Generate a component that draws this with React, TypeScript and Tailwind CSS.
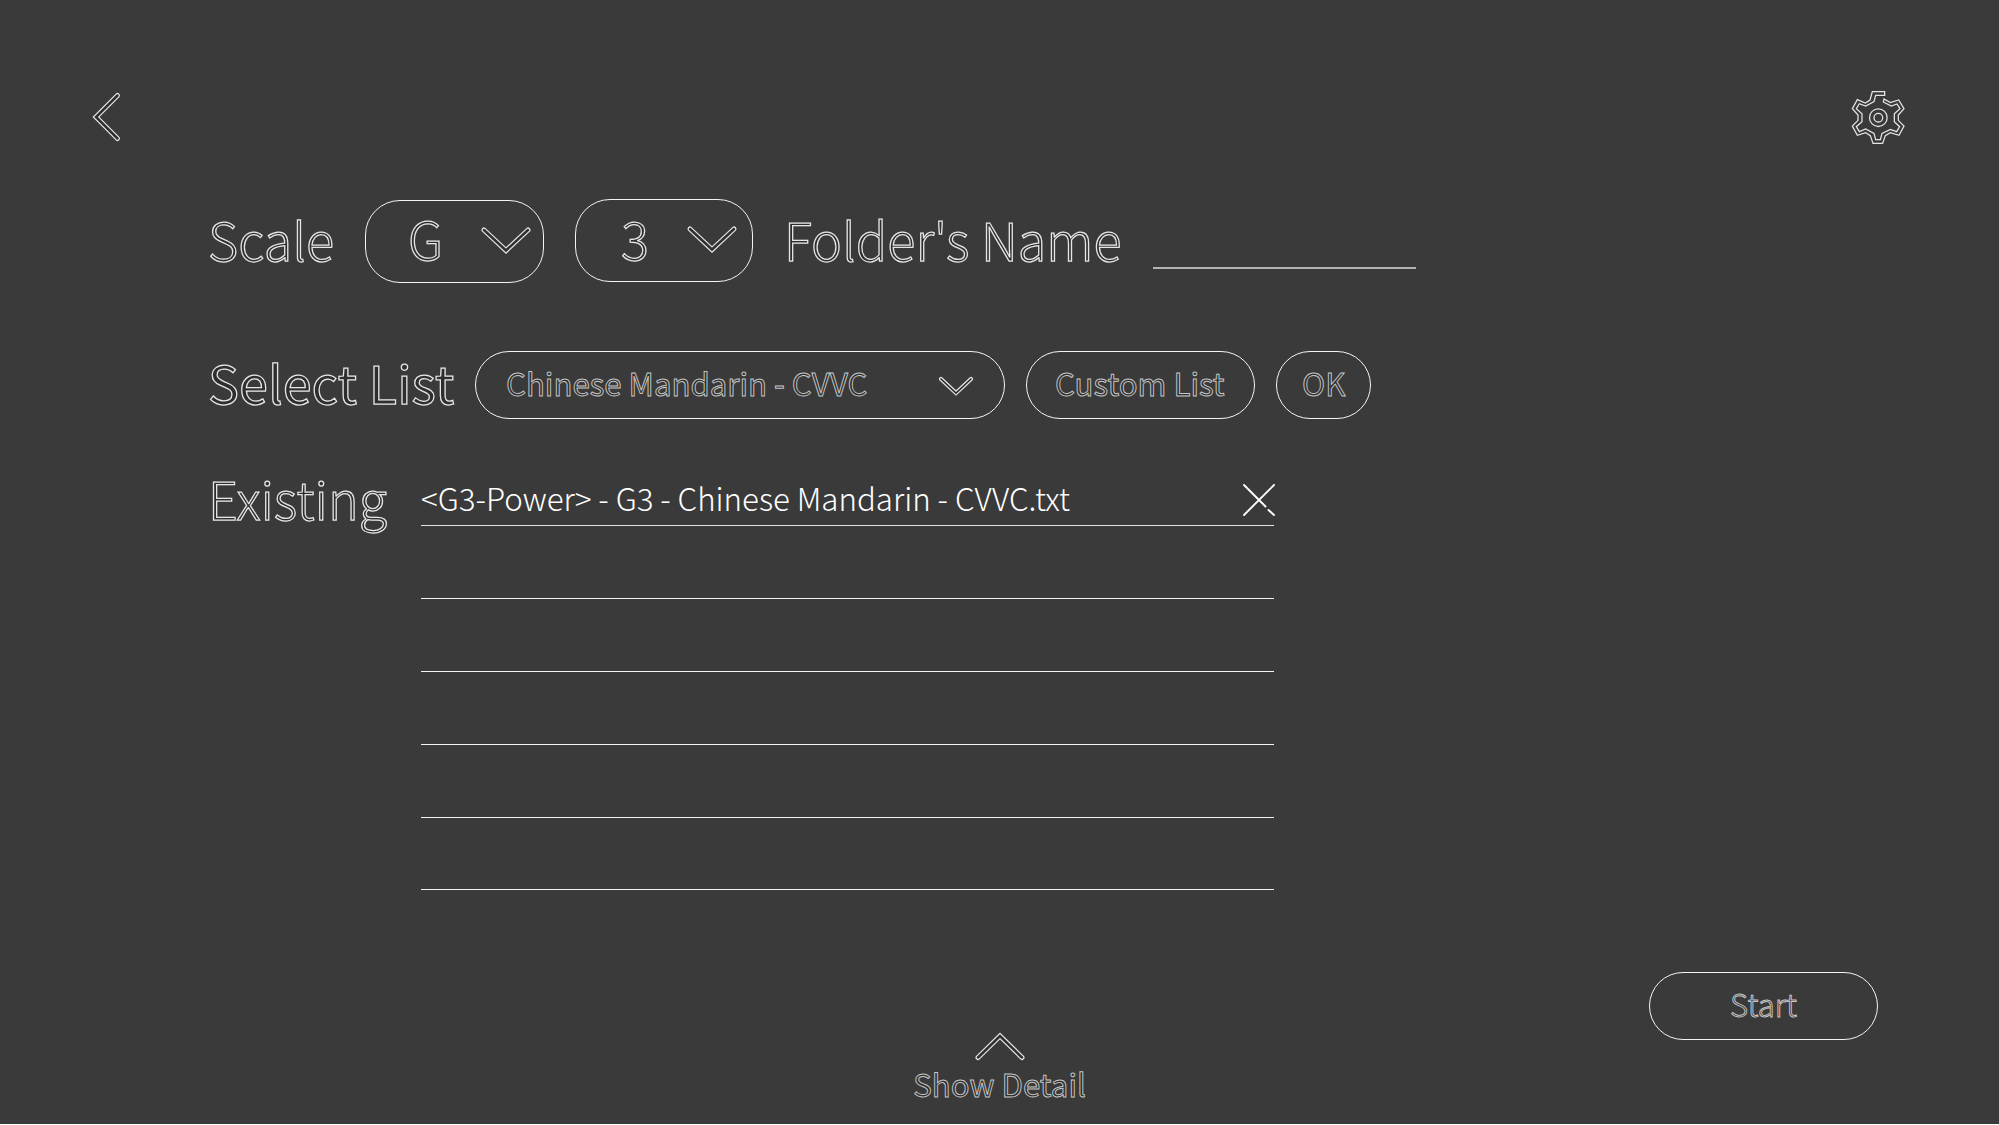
import React from "react";

const FONT = "font-['Noto_Sans_CJK_SC','Noto_Sans',sans-serif] font-light";
const TITLE = "block shrink-0 whitespace-nowrap text-[52.1px] leading-[80px] text-[#2e2e2e] [-webkit-text-stroke:1.25px_#e6e6e6]";
const LABEL = "block shrink-0 whitespace-nowrap text-[31.2px] leading-[48px] text-[#303030] opacity-[0.99] [-webkit-text-stroke:0.95px_#c8c8c8]";
const PILL = "flex shrink-0 items-start border border-[#f4f4f4]";

type ChevronProps = { d: string; width: number; height: number; className?: string; weight?: number };

function Chevron({ d, width, height, className = "", weight = 5 }: ChevronProps) {
  return (
    <svg width={width} height={height} viewBox={`0 0 ${width} ${height}`} fill="none" strokeLinecap="round" className={`block shrink-0 ${className}`}>
      <path d={d} stroke="#e4e4e4" strokeWidth={weight} />
      <path d={d} stroke="#303030" strokeWidth={weight - 2.5} />
    </svg>
  );
}

function Gear() {
  return (
    <svg width="56" height="56" viewBox="60 57 168 168" fill="none" stroke="#e4e4e4" strokeWidth="3.8" className="block">
      <path d="M164 65H127L120 90L106 99L82 89L67 116L84 135V151L67 168L82 196L107 188L121 197L129 220H158L166 197L181 188L207 196L222 168L205 151V135L222 116L206 90L181 98L162 87L160 96L184 108L201 102L210 116L193 131V155L209 170L200 185L181 178L156 190L151 209H137L132 190L107 177L88 185L79 170L96 155V131L79 116L88 101L107 108L132 95L137 76H164Z" />
      <circle cx="145" cy="143" r="26.5" />
      <circle cx="145" cy="143" r="13" />
    </svg>
  );
}

export default function App() {
  return (
    <div className={`flex h-[1125px] w-[1999px] flex-col overflow-hidden border-b border-white bg-[#3a3a3a] ${FONT}`}>
      <header className="flex h-[198px] shrink-0 items-start justify-between pl-[91px] pr-[93px] pt-[89px]">
        <button aria-label="Back">
          <Chevron width={32} height={56} d="M26.5 6.5L5 28L26.5 49.5" />
        </button>
        <button aria-label="Settings">
          <Gear />
        </button>
      </header>

      <section className="flex h-[152px] shrink-0 items-start pl-[208px]">
        <span className={`${TITLE} mt-px w-[157px]`}>Scale</span>
        <button className={`${PILL} mt-[2px] h-[83px] w-[179px] rounded-[35px] pl-[42px]`}>
          <span className={`${TITLE} -mt-[3px] w-[72px] text-left`}>G</span>
          <Chevron width={52} height={32} className="mt-[25px]" d="M4 4L26 24.5L48 4" />
        </button>
        <button className={`${PILL} ml-[31px] mt-px h-[83px] w-[178px] rounded-[35px] pl-[45px]`}>
          <span className={`${TITLE} -mt-[2px] w-[65px] text-left`}>3</span>
          <Chevron width={52} height={32} className="mt-[25px]" d="M4 4L26 24.5L48 4" />
        </button>
        <label className={`${TITLE} ml-[31px] mt-px w-[369px]`}>Folder's Name</label>
        <div className="mt-[69px] h-[2px] w-[263px] bg-[#b4b4b4]" />
      </section>

      <section className="flex h-[120px] shrink-0 items-start pl-[208px]">
        <span className={`${TITLE} -mt-[8px] w-[267px] font-normal`}>Select List</span>
        <button className={`${PILL} mt-px h-[68px] w-[530px] rounded-[34px] pl-[30px]`}>
          <span className={`${LABEL} mt-[7px] w-[431px] text-left font-normal`}>Chinese Mandarin - CVVC</span>
          <Chevron width={38} height={26} weight={4.2} className="mt-[23px]" d="M4 4L19 18L34 4" />
        </button>
        <button className={`${PILL} ml-[21px] mt-px h-[68px] w-[229px] rounded-[34px] pl-[28px]`}>
          <span className={`${LABEL} mt-[7px] font-normal`}>Custom List</span>
        </button>
        <button className={`${PILL} ml-[21px] mt-px h-[68px] w-[95px] rounded-[34px] pl-[25px]`}>
          <span className={`${LABEL} mt-[7px] font-normal`}>OK</span>
        </button>
      </section>

      <section className="flex h-[502px] shrink-0 items-start pl-[208px]">
        <span className={`${TITLE} -mt-[12px] w-[213px]`}>Existing</span>
        <ul className="w-[853px]">
          <li className="flex h-[56.4px] items-start justify-between border-b border-[#e4e4e4]">
            <span className="whitespace-nowrap pt-[4px] text-[31.25px] leading-[48px] text-white">&lt;G3-Power&gt; - G3 - Chinese Mandarin - CVVC.txt</span>
            <button aria-label="Remove" className="-mr-px mt-[13.5px]">
              <svg width="32" height="32" viewBox="0 0 32 32" fill="none" stroke="#ffffff" strokeWidth="1.9" strokeLinecap="round" className="block">
                <path d="M1 31L31 1M1 1L22.5 22.5M25.5 26L31 31" />
              </svg>
            </button>
          </li>
          {[0, 1, 2, 3, 4].map((row) => (
            <li key={row} className="h-[72.8px] border-b border-[#f4f4f4]" />
          ))}
        </ul>
      </section>

      <footer className="grid grow grid-cols-[1fr_229px] pr-[121px]">
        <button className="ml-[350px] mt-[58px] flex flex-col items-center self-start">
          <Chevron width={52} height={32} d="M4 27.5L26 6L48 27.5" />
          <span className={`${LABEL} -mt-[2px] font-normal`}>Show Detail</span>
        </button>
        <button className={`${PILL} h-[68px] justify-center rounded-[34px]`}>
          <span className={`${LABEL} mt-[7px]`}>Start</span>
        </button>
      </footer>
    </div>
  );
}
